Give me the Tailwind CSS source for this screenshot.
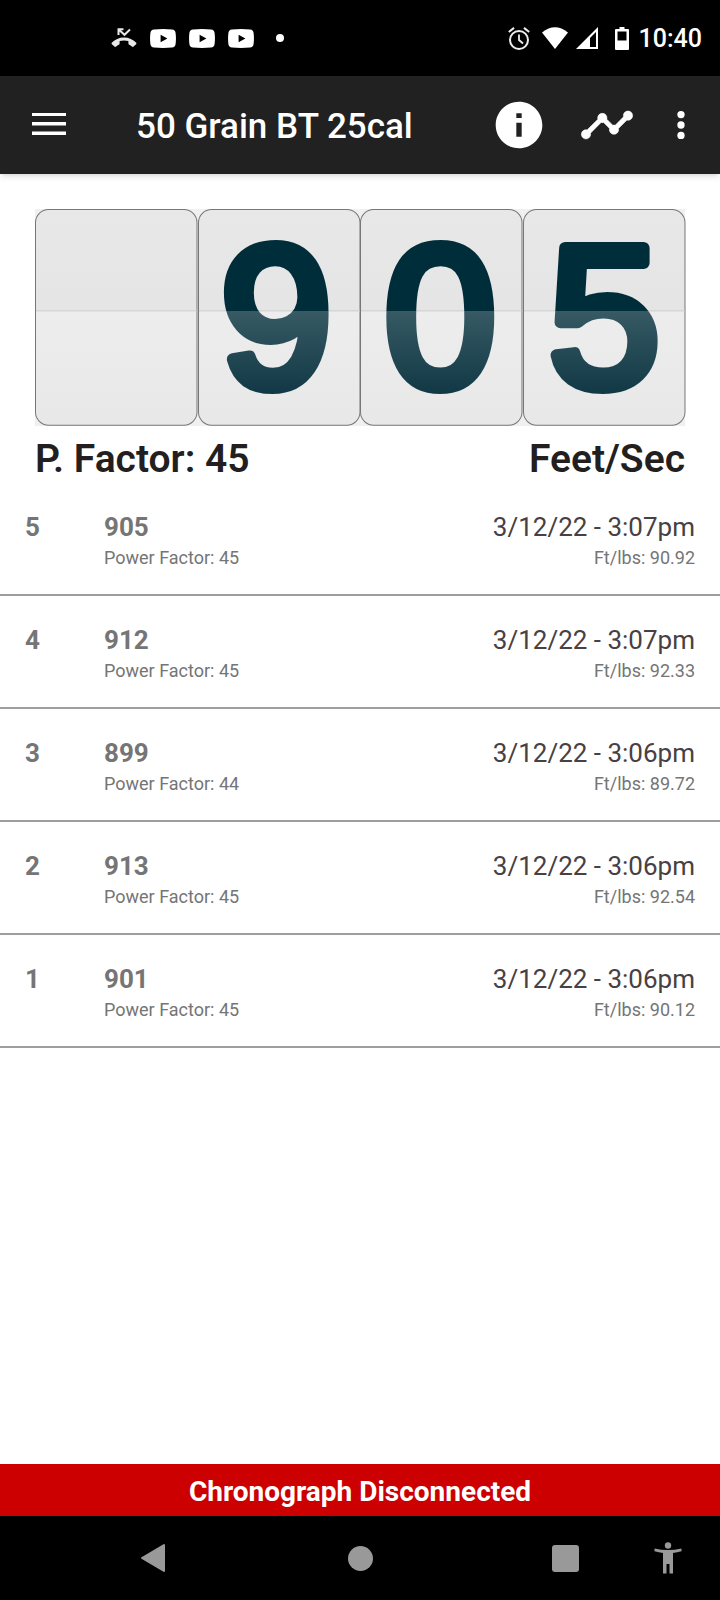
<!DOCTYPE html>
<html lang="en">
<head>
<meta charset="utf-8">
<meta name="viewport" content="width=device-width, initial-scale=1">
<title>50 Grain BT 25cal</title>
<script src="https://cdn.jsdelivr.net/npm/@tailwindcss/browser@4"></script>
</head>
<body class="flex min-h-screen flex-col bg-white font-['Roboto',sans-serif] text-[#231f20]">

<div class="flex h-19 shrink-0 items-center justify-between bg-black pr-[18px] pl-[111px] text-white">
  <div class="flex items-center gap-[13px]">
    <svg class="h-5 w-[26px]" viewBox="0 0 26 20" fill="none" aria-label="Missed call">
      <path d="M1 14.500C4 11.500 8 9.500 13 9.500s9 2 12 5c.6.6.6 1.200.1 1.700l-2.500 2.400c-.5.500-1.200.500-1.700 0-.8-.7-1.700-1.300-2.700-1.800-.5-.2-.8-.6-.8-1.200v-2.500c-2.900-.9-5.900-.9-8.800 0v2.500c0 .6-.3 1-.8 1.200-1 .5-1.900 1.100-2.700 1.800-.5.500-1.200.500-1.700 0L.9 16.200c-.5-.5-.5-1.100.1-1.700z" fill="#e8e8e8"/>
      <path d="M7.500 7V1.300h5M8 1.800l5.500 5L19 1.500" stroke="#e8e8e8" stroke-width="2"/>
    </svg>
    <svg class="h-[19px] w-[26px]" viewBox="0 0 26 19" aria-label="YouTube"><path fill="#fff" fill-rule="evenodd" d="M4 .5Q13-.4 22 .5q3.200.3 3.600 3.500.7 5.500 0 11-.4 3.200-3.600 3.500-9 .9-18 0Q.8 18.200.4 15q-.7-5.500 0-11Q.8.800 4 .5zM10.600 5.700v7.600l6.800-3.800z"/></svg>
    <svg class="h-[19px] w-[26px]" viewBox="0 0 26 19" aria-label="YouTube"><path fill="#fff" fill-rule="evenodd" d="M4 .5Q13-.4 22 .5q3.200.3 3.600 3.500.7 5.500 0 11-.4 3.200-3.600 3.500-9 .9-18 0Q.8 18.200.4 15q-.7-5.500 0-11Q.8.800 4 .5zM10.600 5.700v7.600l6.800-3.800z"/></svg>
    <svg class="h-[19px] w-[26px]" viewBox="0 0 26 19" aria-label="YouTube"><path fill="#fff" fill-rule="evenodd" d="M4 .5Q13-.4 22 .5q3.200.3 3.600 3.500.7 5.500 0 11-.4 3.200-3.600 3.500-9 .9-18 0Q.8 18.200.4 15q-.7-5.500 0-11Q.8.800 4 .5zM10.600 5.700v7.600l6.800-3.800z"/></svg>
    <span class="ml-[9px] size-2 rounded-full bg-white"></span>
  </div>
  <div class="flex items-center">
    <svg class="h-[23px] w-[22px]" viewBox="0 0 22 23" fill="none" stroke="#eee" aria-label="Alarm"><circle cx="11" cy="13" r="9" stroke-width="2"/><path d="M11 7.500V13l4 3.500" stroke-width="1.800"/><path d="M.8 5 6 .9M21.200 5 16 .9" stroke-width="2"/></svg>
    <svg class="ml-3 h-[22px] w-[26px]" viewBox="0 0 26 22" fill="#fff" aria-label="Wi-Fi"><path d="M0 5.500Q13-5 26 5.500L13 22z"/></svg>
    <svg class="ml-2 h-[22px] w-[22px]" viewBox="0 0 22 22" aria-label="Signal"><path d="M22 0v22H0z" fill="#fff"/><path d="M20 5v15h-6v-9z" fill="#000"/></svg>
    <svg class="ml-[17px] h-[23px] w-[14px]" viewBox="0 0 14 23" aria-label="Battery"><path fill="#fff" fill-rule="evenodd" d="M4.500 0h5v2H13q1 0 1 1v19q0 1-1 1H1q-1 0-1-1V3q0-1 1-1h3.500zM2.500 4.500v9h9v-9z"/></svg>
    <span class="ml-[10px] pt-[2px] text-[25px] leading-8 font-medium">10:40</span>
  </div>
</div>

<header class="z-10 flex h-[98px] shrink-0 items-center bg-[#212121] pr-[17px] pl-8 text-white shadow-md">
  <button type="button" aria-label="Open menu"><svg class="h-[26px] w-[34px]" viewBox="0 0 34 26" fill="#fff"><path d="M0 1h34v3H0zM0 10h34v3.500H0zM0 19.500h34v3.500H0z"/></svg></button>
  <h1 class="ml-[70px] flex-1 pt-1 text-[35px] leading-10 font-medium">50 Grain BT 25cal</h1>
  <button type="button" aria-label="Information"><svg class="size-14" viewBox="0 0 24 24" fill="#fff"><path d="M12 2C6.480 2 2 6.480 2 12s4.480 10 10 10 10-4.480 10-10S17.520 2 12 2zm1.150 15h-2.300v-6h2.300zm0-8h-2.300V7h2.300z"/></svg></button>
  <button type="button" aria-label="Chart" class="ml-8"><svg class="size-14" viewBox="0 0 24 24" fill="#fff" stroke="#fff" stroke-width=".2"><path d="M23 8c0 1.100-.9 2-2 2-.18 0-.35-.02-.51-.07l-3.560 3.550c.05.160.070.340.070.520 0 1.100-.9 2-2 2s-2-.9-2-2c0-.18.020-.36.070-.52l-2.550-2.550c-.16.050-.34.070-.52.070s-.36-.02-.52-.07l-4.550 4.560c.05.160.070.330.070.510 0 1.100-.9 2-2 2s-2-.9-2-2 .9-2 2-2c.18 0 .35.020.510.070l4.560-4.550C8.020 9.360 8 9.180 8 9c0-1.100.9-2 2-2s2 .9 2 2c0 .18-.02.36-.07.520l2.550 2.550c.16-.05.34-.07.520-.07s.36.020.520.070l3.550-3.560C19.020 8.350 19 8.180 19 8c0-1.100.9-2 2-2s2 .9 2 2z"/></svg></button>
  <button type="button" aria-label="More options" class="ml-6"><svg class="size-11" viewBox="0 0 24 24" fill="#fff"><circle cx="12" cy="6.300" r="2"/><circle cx="12" cy="12" r="2"/><circle cx="12" cy="17.700" r="2"/></svg></button>
</header>

<main class="flex flex-1 flex-col">
  <svg class="absolute size-0" aria-hidden="true">
    <defs>
      <linearGradient id="ink" gradientUnits="userSpaceOnUse" x1="0" y1="0" x2="0" y2="216">
        <stop offset="0" stop-color="#002d3a"/><stop offset=".47" stop-color="#002d3a"/><stop offset=".47" stop-color="#375a64"/><stop offset=".86" stop-color="#103844"/><stop offset="1" stop-color="#082f3b"/>
      </linearGradient>
      <linearGradient id="card" gradientUnits="userSpaceOnUse" x1="0" y1="0" x2="0" y2="216">
        <stop offset="0" stop-color="#e8e8e8"/><stop offset=".47" stop-color="#e5e5e5"/><stop offset=".47" stop-color="#ededed"/><stop offset="1" stop-color="#e8e8e8"/>
      </linearGradient>
    </defs>
  </svg>
  <section class="px-[35px] pt-[35px]" aria-label="Latest velocity">
    <div class="grid grid-cols-4 bg-[#f0f0f0] font-['Liberation_Sans',sans-serif] text-[200px]">
      <svg class="w-full" viewBox="0 0 162 216"><rect x=".5" y=".5" width="161" height="215" rx="13" fill="url(#card)" stroke="#777"/><path d="M1 101.500h160" stroke="#d6d6d6" stroke-width="1.500"/></svg>
      <svg class="w-full overflow-visible" viewBox="0 0 162 216"><rect x=".5" y=".5" width="161" height="215" rx="13" fill="url(#card)" stroke="#777"/><path d="M1 101.500h160" stroke="#d6d6d6" stroke-width="1.500"/><text x="78" y="176" text-anchor="middle" fill="url(#ink)" stroke="url(#ink)" stroke-width="12" stroke-linejoin="round">9</text></svg>
      <svg class="w-full overflow-visible" viewBox="0 0 162 216"><rect x=".5" y=".5" width="161" height="215" rx="13" fill="url(#card)" stroke="#777"/><path d="M1 101.500h160" stroke="#d6d6d6" stroke-width="1.500"/><text x="80" y="176" text-anchor="middle" fill="url(#ink)" stroke="url(#ink)" stroke-width="12" stroke-linejoin="round">0</text></svg>
      <svg class="w-full overflow-visible" viewBox="0 0 162 216"><rect x=".5" y=".5" width="161" height="215" rx="13" fill="url(#card)" stroke="#777"/><path d="M1 101.500h160" stroke="#d6d6d6" stroke-width="1.500"/><text x="81" y="176" text-anchor="middle" fill="url(#ink)" stroke="url(#ink)" stroke-width="12" stroke-linejoin="round">5</text></svg>
    </div>
    <div class="flex justify-between pt-[9px] text-[39px] leading-12 font-semibold">
      <p>P. Factor: 45</p>
      <p>Feet/Sec</p>
    </div>
  </section>

  <ul class="text-[18px] leading-[30px] text-[#757575]">
    <li class="flex h-[113px] border-b-2 border-[#9e9e9e] px-[25px] pt-7">
      <span class="w-[79px] text-[26px] leading-8 font-bold">5</span>
      <div class="flex-1"><p class="text-[26px] leading-8 font-bold">905</p><p>Power Factor: 45</p></div>
      <div class="text-right"><p class="text-[26px] leading-8 text-[#484042]">3/12/22 - 3:07pm</p><p>Ft/lbs: 90.92</p></div>
    </li>
    <li class="flex h-[113px] border-b-2 border-[#9e9e9e] px-[25px] pt-7">
      <span class="w-[79px] text-[26px] leading-8 font-bold">4</span>
      <div class="flex-1"><p class="text-[26px] leading-8 font-bold">912</p><p>Power Factor: 45</p></div>
      <div class="text-right"><p class="text-[26px] leading-8 text-[#484042]">3/12/22 - 3:07pm</p><p>Ft/lbs: 92.33</p></div>
    </li>
    <li class="flex h-[113px] border-b-2 border-[#9e9e9e] px-[25px] pt-7">
      <span class="w-[79px] text-[26px] leading-8 font-bold">3</span>
      <div class="flex-1"><p class="text-[26px] leading-8 font-bold">899</p><p>Power Factor: 44</p></div>
      <div class="text-right"><p class="text-[26px] leading-8 text-[#484042]">3/12/22 - 3:06pm</p><p>Ft/lbs: 89.72</p></div>
    </li>
    <li class="flex h-[113px] border-b-2 border-[#9e9e9e] px-[25px] pt-7">
      <span class="w-[79px] text-[26px] leading-8 font-bold">2</span>
      <div class="flex-1"><p class="text-[26px] leading-8 font-bold">913</p><p>Power Factor: 45</p></div>
      <div class="text-right"><p class="text-[26px] leading-8 text-[#484042]">3/12/22 - 3:06pm</p><p>Ft/lbs: 92.54</p></div>
    </li>
    <li class="flex h-[113px] border-b-2 border-[#9e9e9e] px-[25px] pt-7">
      <span class="w-[79px] text-[26px] leading-8 font-bold">1</span>
      <div class="flex-1"><p class="text-[26px] leading-8 font-bold">901</p><p>Power Factor: 45</p></div>
      <div class="text-right"><p class="text-[26px] leading-8 text-[#484042]">3/12/22 - 3:06pm</p><p>Ft/lbs: 90.12</p></div>
    </li>
  </ul>
</main>

<div role="status" class="bg-[#cc0000] pt-2 pb-1 text-center text-[28px] leading-10 font-bold text-white">Chronograph Disconnected</div>

<nav class="grid h-[84px] shrink-0 grid-cols-[78fr_149fr_266fr_144fr_62fr_21fr] items-center justify-items-center bg-black" aria-label="System navigation">
  <button type="button" aria-label="Back" class="col-start-2"><svg class="h-[30px] w-[26px]" viewBox="0 0 26 30"><path d="M2 15 24 2v26z" fill="#999" stroke="#999" stroke-width="2" stroke-linejoin="round"/></svg></button>
  <button type="button" aria-label="Home" class="size-[25px] rounded-full bg-[#999]"></button>
  <button type="button" aria-label="Recent apps" class="size-[27px] rounded-[3px] bg-[#999]"></button>
  <button type="button" aria-label="Accessibility"><svg class="h-8 w-7" viewBox="0 0 28 32" fill="#999"><circle cx="14" cy="3.500" r="3.200"/><path d="M.5 6.500Q14 9.500 27.500 6.500V9.300Q23 10.600 19 10.900V31.500H15.500V22H12.500V31.500H9V10.900Q5 10.600.5 9.300z"/></svg></button>
</nav>
</body>
</html>
